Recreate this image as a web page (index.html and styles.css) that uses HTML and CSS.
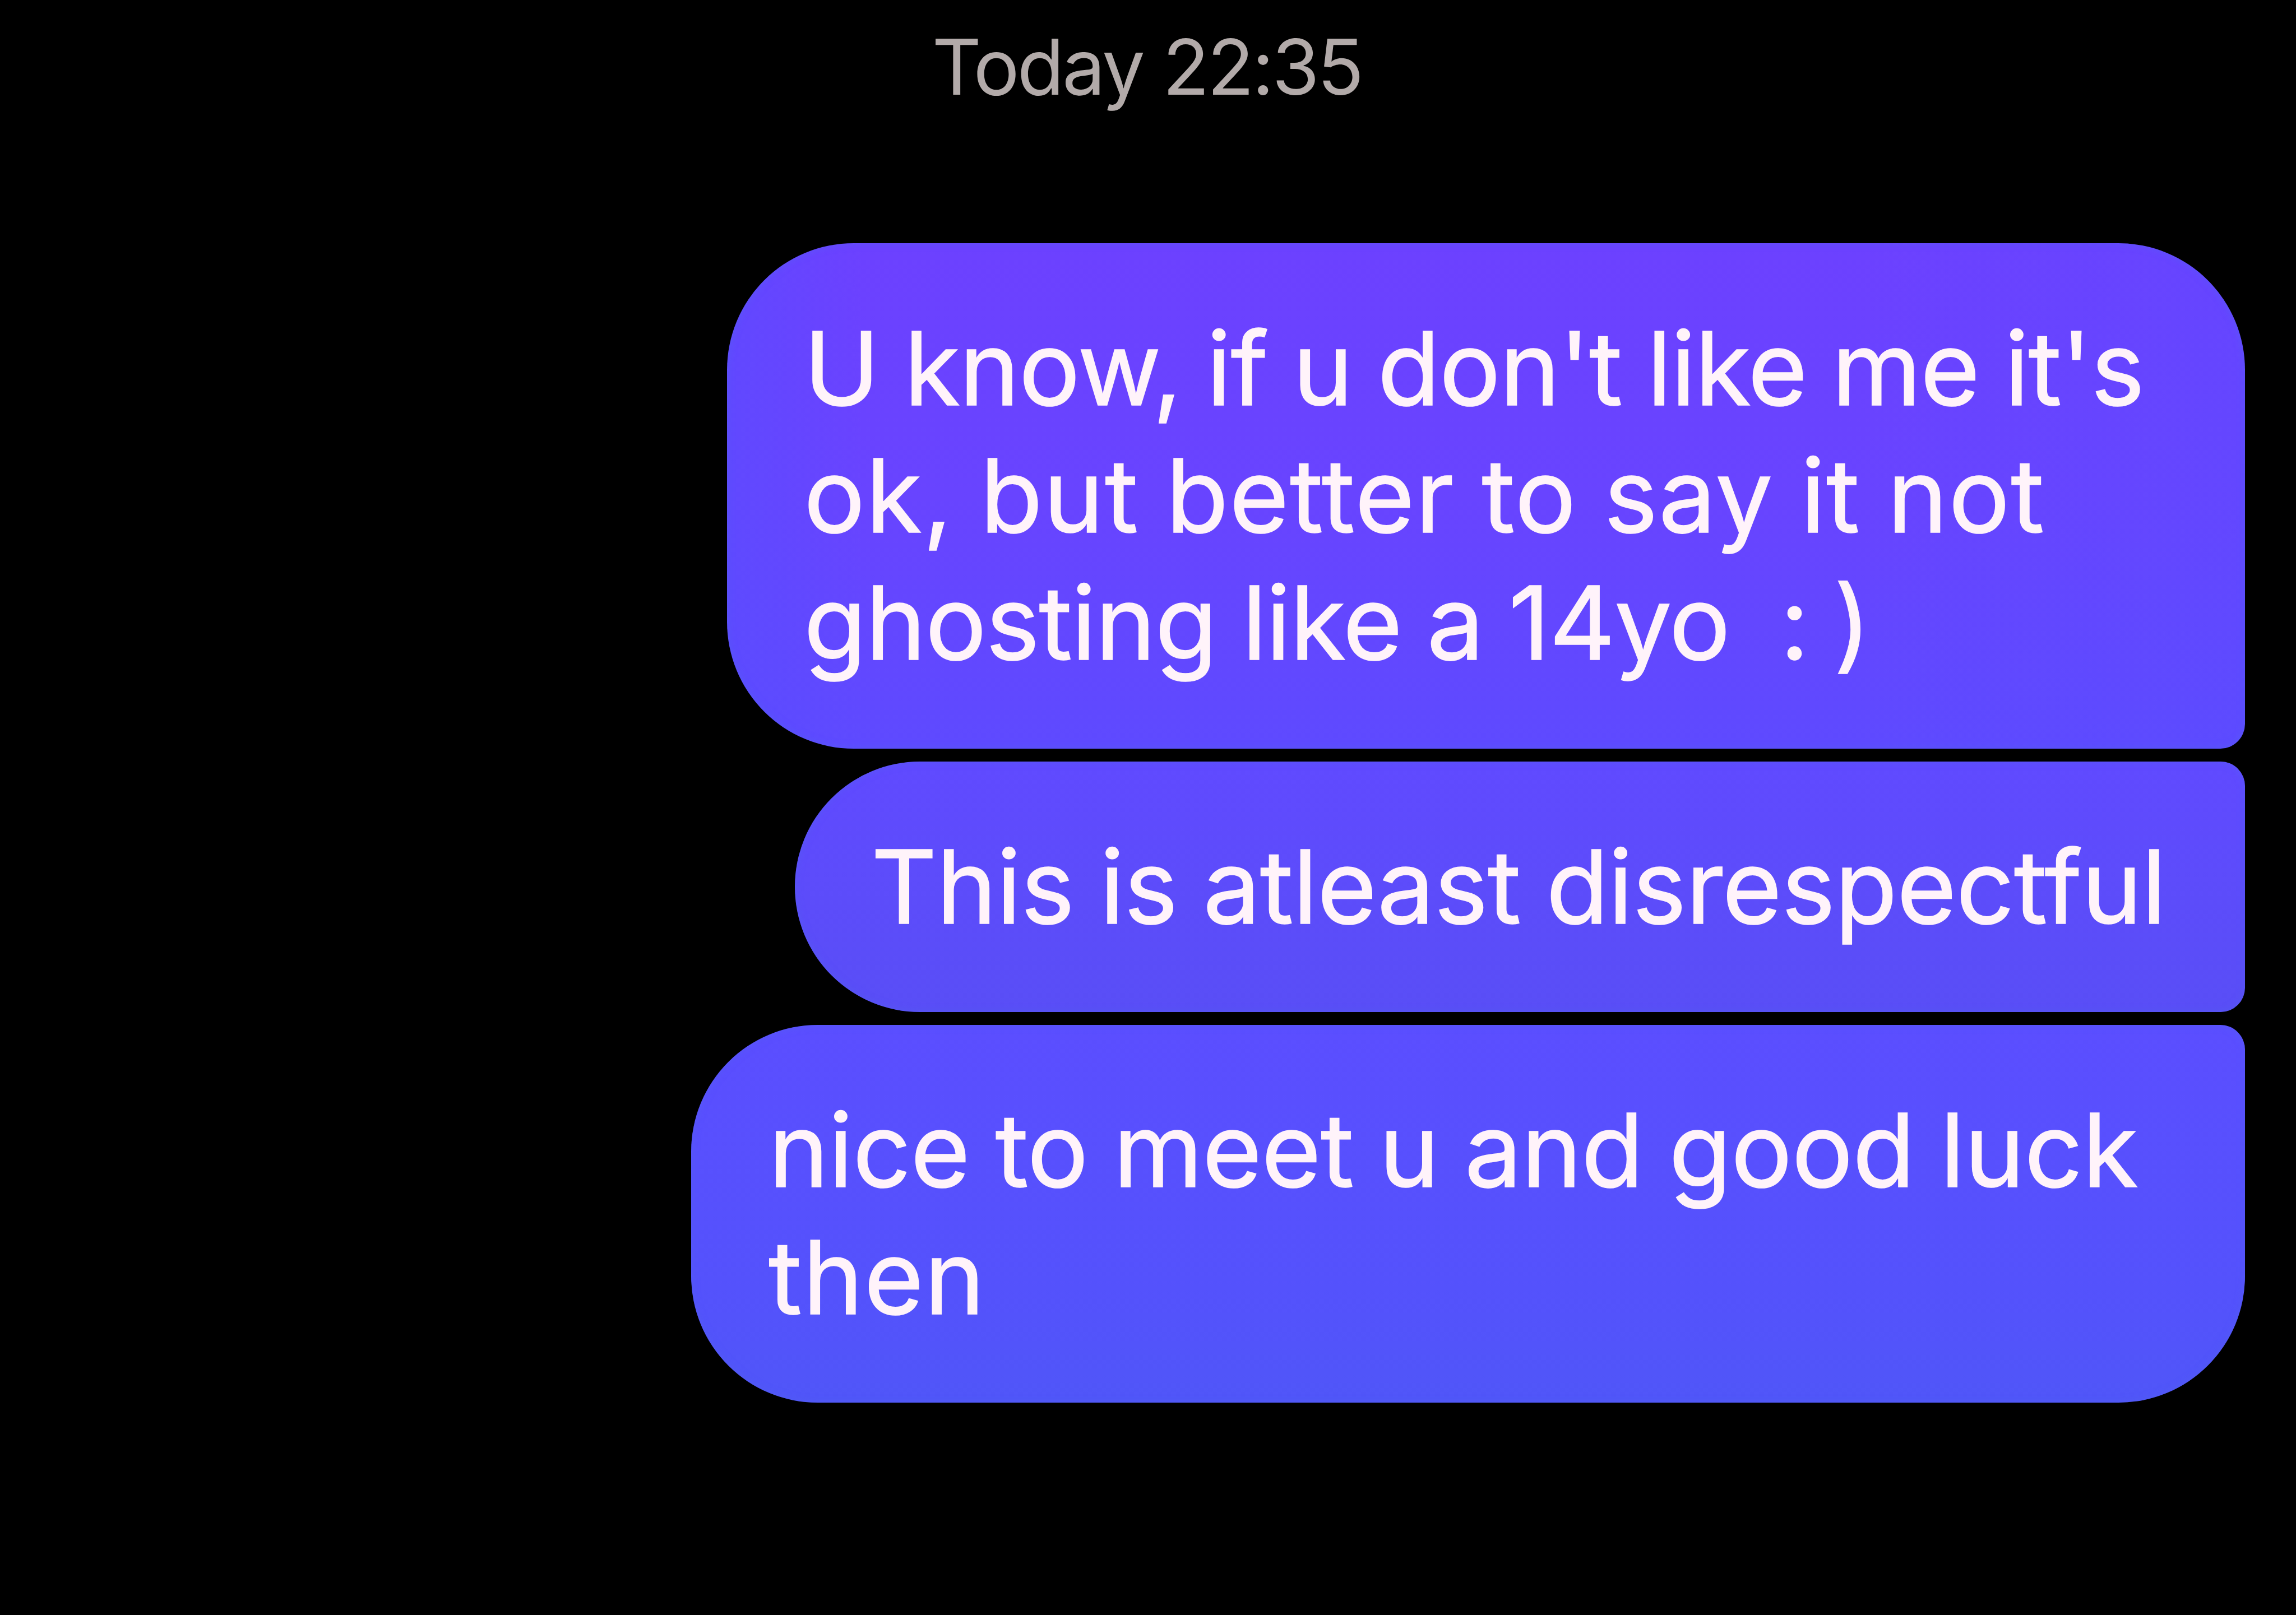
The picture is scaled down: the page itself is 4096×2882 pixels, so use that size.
FILE: index.html
```
<!DOCTYPE html>
<html lang="en">
<head>
    <meta charset="UTF-8">
    <meta name="viewport" content="width=device-width, initial-scale=1.0">
    <title>Chat</title>
    <link rel="stylesheet" href="styles.css">
</head>
<body>

    <div class="chat">
        <div class="timestamp">Today 22:35</div>

        <div class="messages">
            <div class="bubble first">
                <div class="line tight">U know, if u don't like me it's</div>
                <div class="line wide">ok, but better to say it not</div>
                <div class="line tight">ghosting like a 14yo  : )</div>
            </div>
            <div class="bubble middle">
                <div class="line">This is atleast disrespectful</div>
            </div>
            <div class="bubble last">
                <div class="line">nice to meet u and good luck</div>
                <div class="line wide">then</div>
            </div>
        </div>
    </div>

</body>
</html>
```

FILE: styles.css
```
body {
    margin: 0;
    background-color: #000;
    font-family: Inter, "Liberation Sans", sans-serif;
}
.chat {
    box-sizing: border-box;
    height: 2882px;
    padding: 29px 91px 0 0;
    overflow: hidden;
}
.timestamp {
    height: 405px;
    padding-left: 87px;
    color: #b2aaa9;
    font-size: 137px;
    line-height: 180px;
    letter-spacing: -3.8px;
    text-align: center;
}
.messages {
    display: flex;
    flex-direction: column;
    align-items: flex-end;
    gap: 23px;
}
.bubble {
    box-sizing: border-box;
    padding: 110px 0 110px 138px;
    color: #fff3fa;
    font-size: 182px;
    line-height: 227px;
    box-shadow: inset 0 0 14px rgba(84, 96, 240, 0.6);
}
.line {
    letter-spacing: -0.7px;
    word-spacing: -5px;
    white-space: pre;
    -webkit-text-stroke: 1.5px #fff3fa;
}
.tight {
    letter-spacing: -1.3px;
}
.wide {
    letter-spacing: 1.7px;
}
.first {
    width: 2708px;
    padding-bottom: 111px;
    padding-left: 137px;
    border-radius: 226px 226px 44px 226px;
    background: linear-gradient(90deg, rgba(88, 78, 255, 0.5), transparent 9%, transparent 75%, rgba(88, 78, 255, 0.3)),
        linear-gradient(#6c41ff, #6844ff 50%, #5e4aff);
}
.middle {
    width: 2587px;
    padding-left: 136px;
    border-radius: 226px 44px 44px 226px;
    background: linear-gradient(#604aff, #594ef6);
}
.last {
    width: 2772px;
    border-radius: 226px 44px 226px 226px;
    background: linear-gradient(#5b4eff, #5452fc 70%, #5056f8);
}
```
